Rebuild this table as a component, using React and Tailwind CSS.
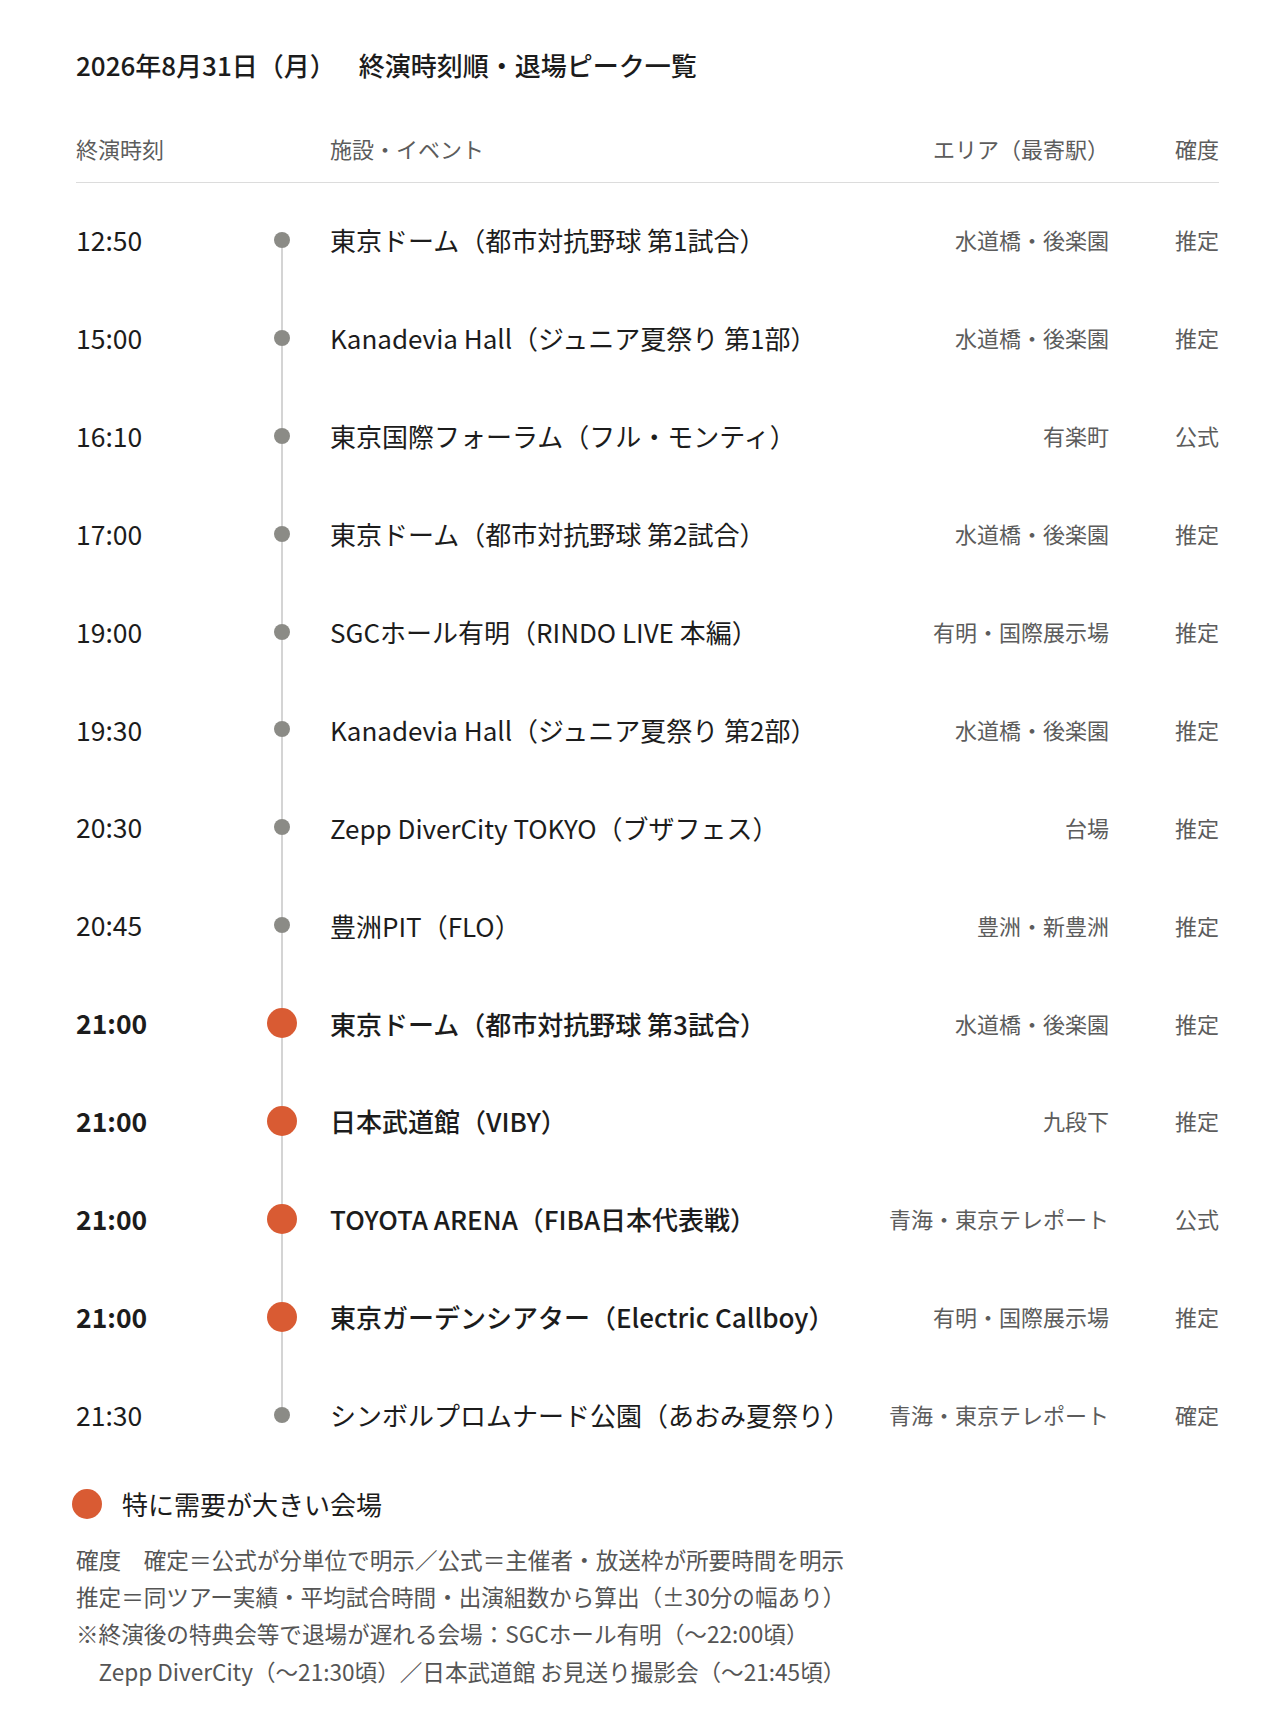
import React from "react";

const rows = [
  { time: "12:50", name: "東京ドーム（都市対抗野球 第1試合）", area: "水道橋・後楽園", level: "推定" },
  { time: "15:00", name: "Kanadevia Hall（ジュニア夏祭り 第1部）", area: "水道橋・後楽園", level: "推定" },
  { time: "16:10", name: "東京国際フォーラム（フル・モンティ）", area: "有楽町", level: "公式" },
  { time: "17:00", name: "東京ドーム（都市対抗野球 第2試合）", area: "水道橋・後楽園", level: "推定" },
  { time: "19:00", name: "SGCホール有明（RINDO LIVE 本編）", area: "有明・国際展示場", level: "推定" },
  { time: "19:30", name: "Kanadevia Hall（ジュニア夏祭り 第2部）", area: "水道橋・後楽園", level: "推定" },
  { time: "20:30", name: "Zepp DiverCity TOKYO（ブザフェス）", area: "台場", level: "推定" },
  { time: "20:45", name: "豊洲PIT（FLO）", area: "豊洲・新豊洲", level: "推定" },
  { time: "21:00", name: "東京ドーム（都市対抗野球 第3試合）", area: "水道橋・後楽園", level: "推定", hot: true },
  { time: "21:00", name: "日本武道館（VIBY）", area: "九段下", level: "推定", hot: true },
  { time: "21:00", name: "TOYOTA ARENA（FIBA日本代表戦）", area: "青海・東京テレポート", level: "公式", hot: true },
  { time: "21:00", name: "東京ガーデンシアター（Electric Callboy）", area: "有明・国際展示場", level: "推定", hot: true },
  { time: "21:30", name: "シンボルプロムナード公園（あおみ夏祭り）", area: "青海・東京テレポート", level: "確定" },
];

const Row = ({ row, first, last }) => (
  <div className="grid grid-cols-[190px_32px_1fr_auto_110px] items-center h-[97.9px]">
    <div className={`text-[26.5px] text-[#1c1c1c] ${row.hot ? "font-semibold" : ""}`}>{row.time}</div>
    <div className="flex flex-col items-center h-full">
      <div className={`w-[2px] flex-1 ${first ? "" : "bg-[#d4d4d4]"}`} />
      {row.hot ? (
        <div className="w-[30px] h-[30px] rounded-full bg-[#d95b33] shrink-0" />
      ) : (
        <div className="w-[16px] h-[16px] rounded-full bg-[#8b8b86] shrink-0" />
      )}
      <div className={`w-[2px] flex-1 ${last ? "" : "bg-[#d4d4d4]"}`} />
    </div>
    <div className={`pl-[32px] text-[26px] text-[#1c1c1c] whitespace-nowrap ${row.hot ? "font-medium" : ""}`}>
      {row.name}
    </div>
    <div className="text-right text-[22px] text-[#5c5c5c] whitespace-nowrap">{row.area}</div>
    <div className="text-right text-[22px] text-[#5c5c5c]">{row.level}</div>
  </div>
);

export default function App() {
  return (
    <div
      className="bg-white min-h-[1728px] pl-[76px] pt-[46px]"
      style={{ fontFamily: '"Noto Sans CJK JP", "Noto Sans", sans-serif' }}
    >
      <div className="w-[1143px]">
        <h1 className="text-[26px] leading-[38px] font-medium text-[#1c1c1c] whitespace-nowrap">
          <span>2026年8月31日（月）</span>
          <span className="ml-[23px]">終演時刻順・退場ピーク一覧</span>
        </h1>

        <div className="mt-[47px] grid grid-cols-[190px_32px_1fr_auto_110px] items-center pb-[17px] border-b border-[#dcdcdc] text-[22px] leading-[34px] text-[#5c5c5c]">
          <div>終演時刻</div>
          <div />
          <div className="pl-[32px]">施設・イベント</div>
          <div className="text-right">エリア（最寄駅）</div>
          <div className="text-right">確度</div>
        </div>

        <div className="pt-[8px]">
          {rows.map((row, i) => (
            <Row key={i} row={row} first={i === 0} last={i === rows.length - 1} />
          ))}
        </div>

        <div className="mt-[22px] flex items-center gap-[20px] -ml-[4px]">
          <div className="w-[30px] h-[30px] rounded-full bg-[#d95b33]" />
          <div className="text-[26px] leading-[36px] text-[#1c1c1c]">特に需要が大きい会場</div>
        </div>

        <div className="mt-[19px] text-[22.6px] leading-[37.4px] text-[#555555] whitespace-nowrap">
          <p>確度　確定＝公式が分単位で明示／公式＝主催者・放送枠が所要時間を明示</p>
          <p>推定＝同ツアー実績・平均試合時間・出演組数から算出（±30分の幅あり）</p>
          <p>※終演後の特典会等で退場が遅れる会場：SGCホール有明（〜22:00頃）</p>
          <p>　Zepp DiverCity（〜21:30頃）／日本武道館 お見送り撮影会（〜21:45頃）</p>
        </div>
      </div>
    </div>
  );
}
